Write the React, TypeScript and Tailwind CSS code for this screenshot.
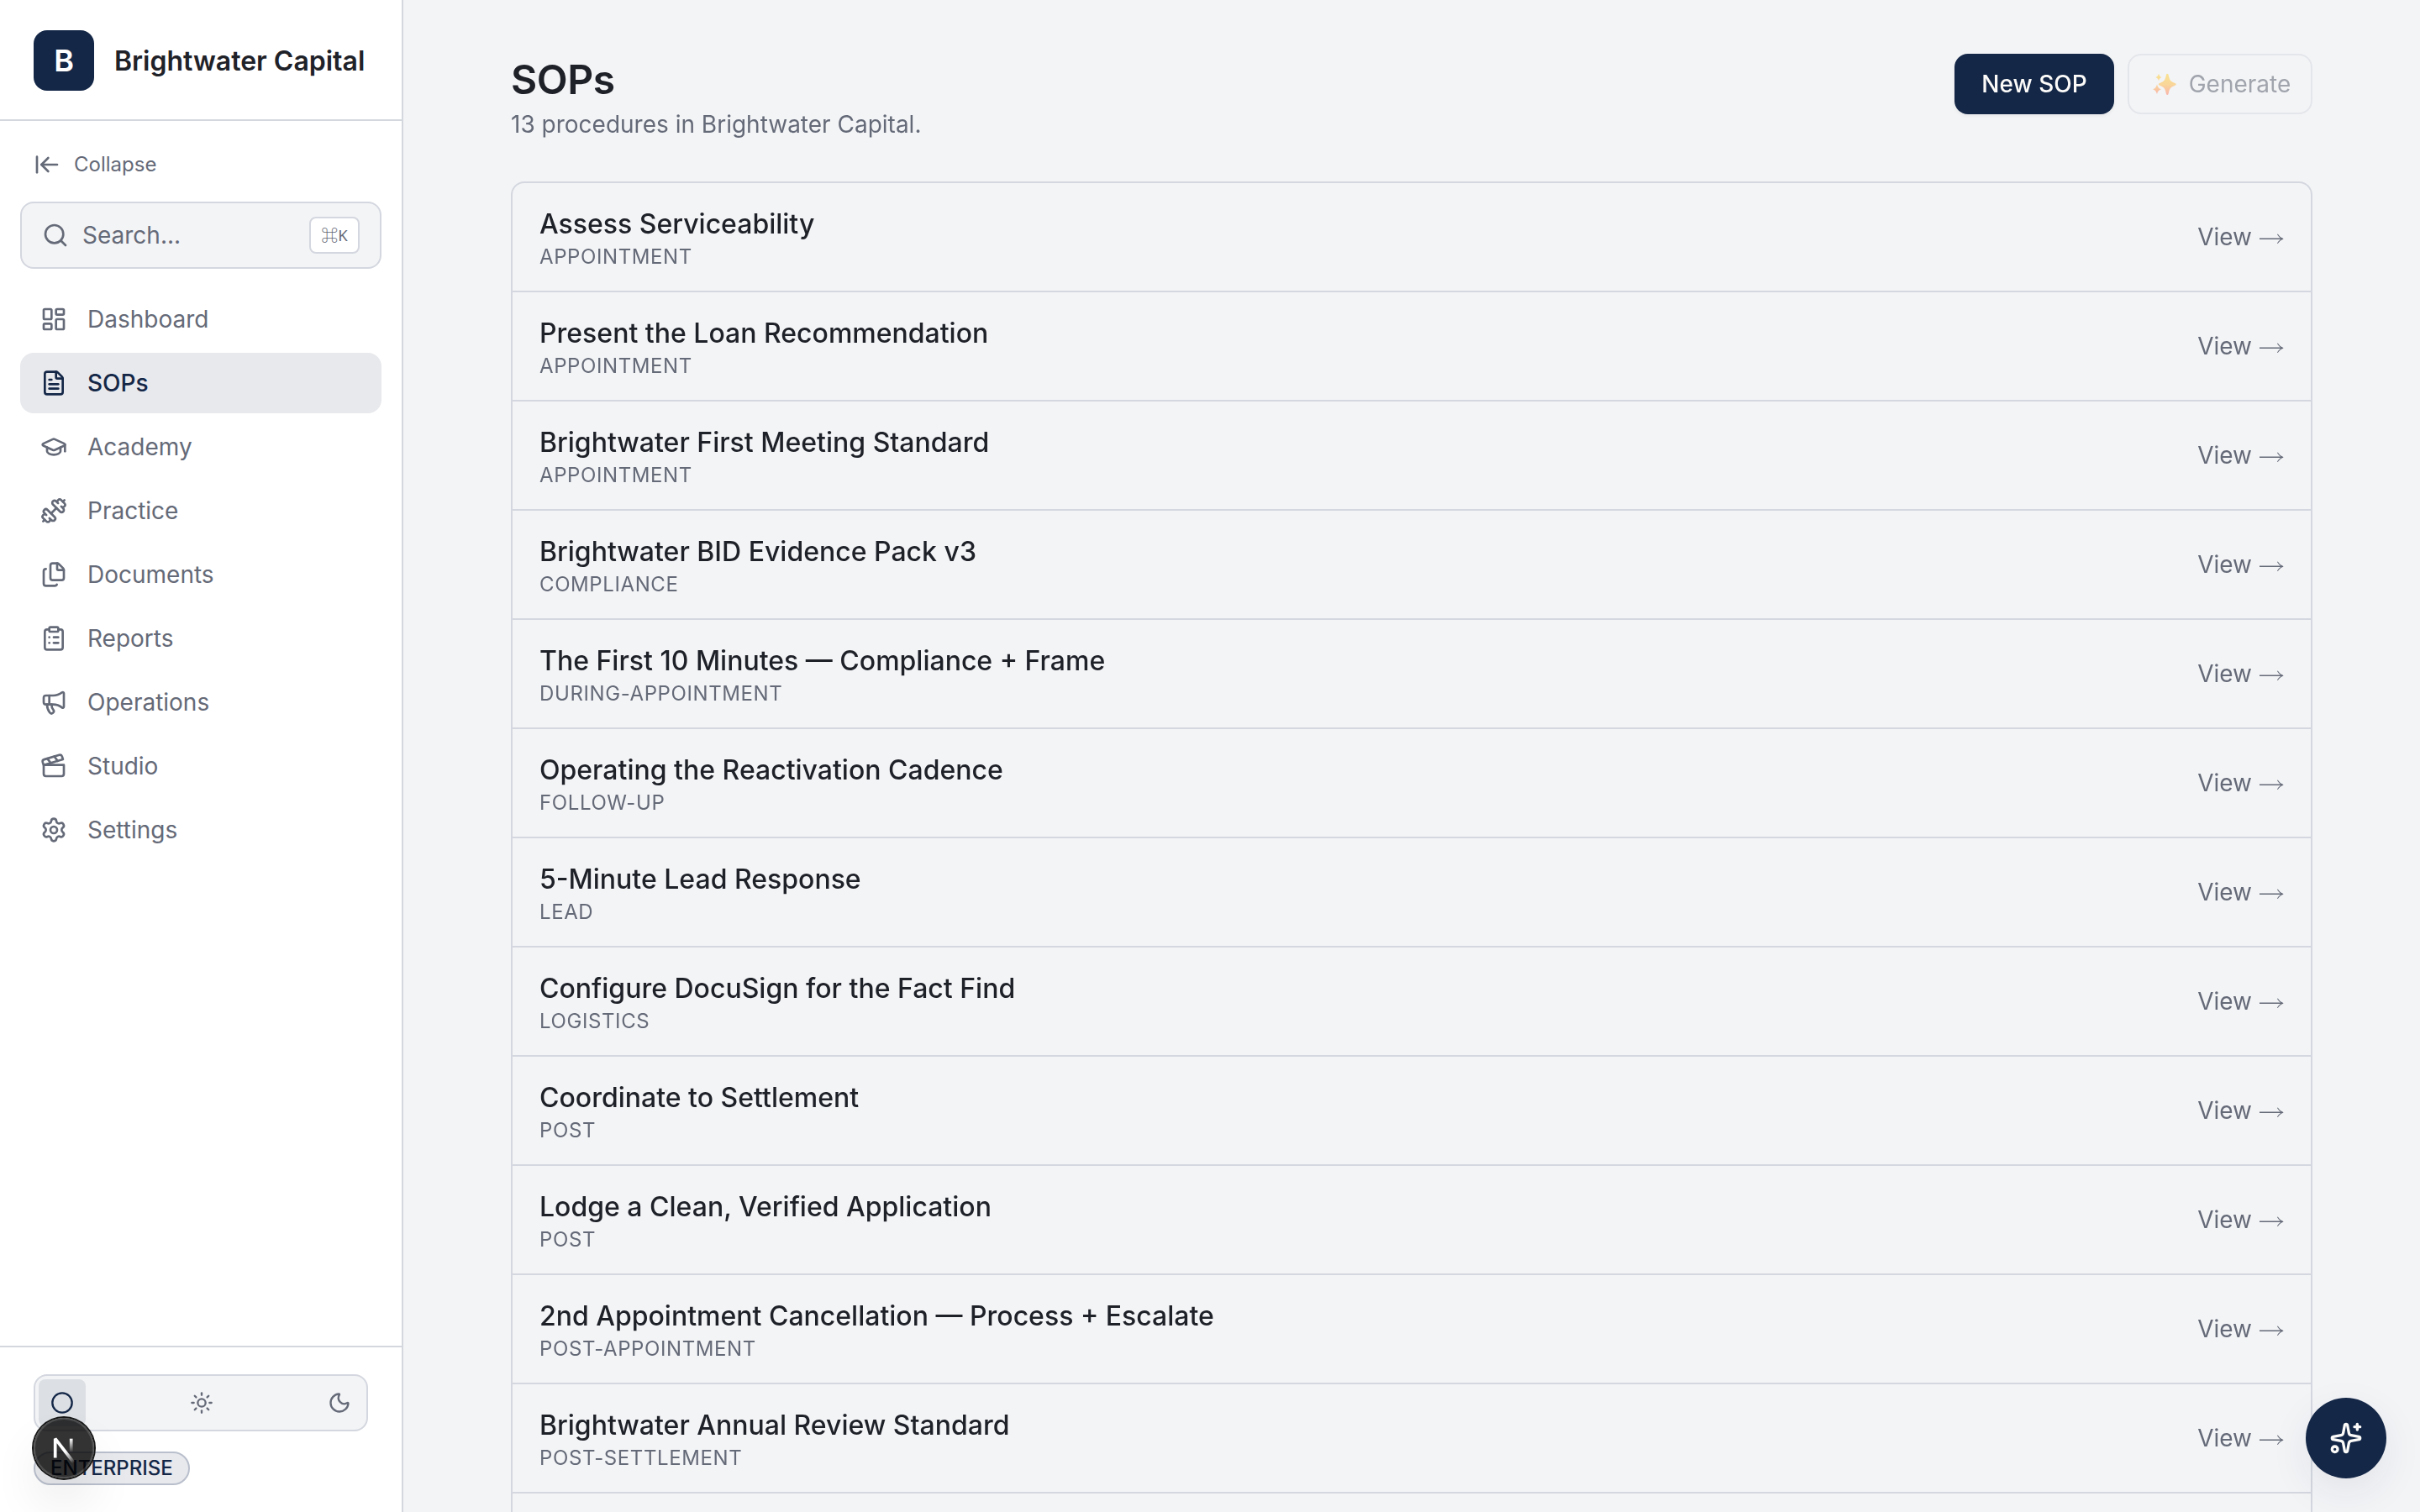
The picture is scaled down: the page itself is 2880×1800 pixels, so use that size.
import React from "react";
import {
    ArrowLeftToLine,
    Circle,
    Clapperboard,
    ClipboardList,
    Dumbbell,
    FileText,
    Files,
    GraduationCap,
    LayoutDashboard,
    Megaphone,
    Moon,
    Search,
    Settings,
    Sparkles,
    Sun,
    type LucideIcon
} from "lucide-react";
import clsx from "clsx";

interface NavItem {
    label: string;
    icon: LucideIcon;
}

interface Procedure {
    title: string;
    stage: string;
}

const navItems: NavItem[] = [
    { label: "Dashboard", icon: LayoutDashboard },
    { label: "SOPs", icon: FileText },
    { label: "Academy", icon: GraduationCap },
    { label: "Practice", icon: Dumbbell },
    { label: "Documents", icon: Files },
    { label: "Reports", icon: ClipboardList },
    { label: "Operations", icon: Megaphone },
    { label: "Studio", icon: Clapperboard },
    { label: "Settings", icon: Settings }
];

const procedures: Procedure[] = [
    { title: "Assess Serviceability", stage: "appointment" },
    { title: "Present the Loan Recommendation", stage: "appointment" },
    { title: "Brightwater First Meeting Standard", stage: "appointment" },
    { title: "Brightwater BID Evidence Pack v3", stage: "compliance" },
    { title: "The First 10 Minutes — Compliance + Frame", stage: "during-appointment" },
    { title: "Operating the Reactivation Cadence", stage: "follow-up" },
    { title: "5-Minute Lead Response", stage: "lead" },
    { title: "Configure DocuSign for the Fact Find", stage: "logistics" },
    { title: "Coordinate to Settlement", stage: "post" },
    { title: "Lodge a Clean, Verified Application", stage: "post" },
    { title: "2nd Appointment Cancellation — Process + Escalate", stage: "post-appointment" },
    { title: "Brightwater Annual Review Standard", stage: "post-settlement" }
];

function ThemeToggle() {
    return (
        <div className="flex items-center justify-between rounded-2xl border-2 border-[#d4d7df] bg-[#f3f4f6] p-1 text-[#656a78]">
            <button className="flex size-14 items-center justify-center rounded-lg bg-[#dcdfe4] text-[#142747]">
                <Circle className="size-7" />
            </button>
            <button className="ml-0.5 flex size-14 items-center justify-center rounded-lg">
                <Sun className="size-7" />
            </button>
            <button className="flex size-14 items-center justify-center rounded-lg">
                <Moon className="size-7" />
            </button>
        </div>
    );
}

function Sidebar({ active }: { active: string }) {
    return (
        <aside className="flex w-[480px] shrink-0 flex-col border-r-2 border-[#d4d7dd] bg-white text-[28px] text-[#656a78]">
            {/* Brand */}
            <div className="flex h-36 items-center gap-6 border-b-2 border-[#d4d7dd] px-10 pt-0.5">
                <div className="flex size-[72px] shrink-0 items-center justify-center rounded-2xl bg-[#142747] text-4xl font-semibold text-white">
                    B
                </div>
                <span className="pt-0.5 text-[32px] font-semibold whitespace-nowrap text-[#1f2229]">
                    Brightwater Capital
                </span>
            </div>

            <div className="flex flex-1 flex-col px-6 pt-6">
                <button className="flex h-14 items-center gap-4 px-4 text-2xl">
                    <ArrowLeftToLine className="size-8" />
                    Collapse
                </button>

                <div className="mt-4 flex h-20 items-center gap-4 rounded-2xl border-2 border-[#d4d7df] bg-[#f3f4f6] px-6">
                    <Search className="size-8" />
                    <span className="flex-1">Search...</span>
                    <kbd className="flex h-11 w-[60px] items-center justify-center rounded-lg border-2 border-[#d4d7df] bg-white font-['Noto_Sans',sans-serif] text-[18.5px] leading-none">
                        <span className="font-['Noto_Sans_CJK_JP',sans-serif] text-xl leading-none">⌘</span>K
                    </kbd>
                </div>

                <nav className="mt-6 flex flex-col gap-1">
                    {navItems.map(({ label, icon: Icon }) => (
                        <a
                            key={label}
                            className={clsx(
                                "flex h-[72px] items-center gap-6 rounded-2xl px-6",
                                label === active && "bg-[#e8e9ed] font-medium text-[#142747]"
                            )}
                        >
                            <Icon className="size-8" />
                            {label}
                        </a>
                    ))}
                </nav>
            </div>

            {/* Footer */}
            <div className="flex h-[198px] flex-col items-stretch gap-6 border-t-2 border-[#d4d7dd] px-10 pt-8">
                <ThemeToggle />
                <span className="flex h-10 items-center self-start rounded-full border-2 border-[#b9bfcc] bg-[#e8e9ed] px-[18px] text-2xl font-medium text-[#142747] uppercase">
                    Enterprise
                </span>
            </div>
        </aside>
    );
}

function LongArrow() {
    return (
        <svg className="h-4 w-[30px]" viewBox="0 0 30 16" fill="currentColor">
            <path d="M1 9.500H26.200C24.500 8.400 23 6.800 22 4.900L22.800 4.500C24.500 7.200 26.600 9.100 29.300 9.900V10.700C26.600 11.500 24.500 13.400 22.800 16L22 15.700C23 13.800 24.500 12.200 26.200 11.100H1Z" />
        </svg>
    );
}

function ProcedureRow({ title, stage }: Procedure) {
    return (
        <a className="flex items-center justify-between border-b-2 border-[#d4d7df] px-8 py-6">
            <div>
                <div className="-mb-0.5 text-[32px] leading-[50px] font-medium text-[#1f2129]">{title}</div>
                <div className="text-2xl leading-8 tracking-wide text-[#656a78] uppercase">{stage}</div>
            </div>
            <span className="flex items-center gap-2 text-[28px] leading-10 text-[#656a78]">
                View
                <LongArrow />
            </span>
        </a>
    );
}

function GenerateStars() {
    return (
        <svg className="h-7 w-[35px]" viewBox="1 0 35 28" fill="url(#stars)">
            <defs>
                <linearGradient id="stars" x1="0" y1="2" x2="0" y2="27" gradientUnits="userSpaceOnUse">
                    <stop stopColor="#ffcf2e" />
                    <stop offset="0.5" stopColor="#ffb83c" />
                    <stop offset="1" stopColor="#ff7460" />
                </linearGradient>
            </defs>
            <path d="M22.3 1.7c.9 0 1.2.7 1.5 2 1 5.2 2.1 7.3 7 9 1.3.4 1.9.8 1.9 1.6s-.6 1.2-1.9 1.6c-4.9 1.7-6 3.8-7 9-.3 1.3-.6 2-1.5 2s-1.2-.7-1.5-2c-1-5.2-2.1-7.3-7-9-1.3-.4-1.9-.8-1.9-1.6s.6-1.2 1.9-1.6c4.9-1.7 6-3.8 7-9 .3-1.3.6-2 1.5-2z" />
            <path d="M12 1.7c.9 2.7 1.4 3.4 3.6 4.3-2.2.9-2.7 1.6-3.6 4.3-.9-2.7-1.4-3.4-3.6-4.3 2.2-.9 2.7-1.6 3.6-4.3z" />
            <path d="M10 14.5c1.1 3.6 1.9 4.6 4.9 5.8-3 1.2-3.8 2.2-4.9 5.8-1.1-3.6-1.9-4.6-4.9-5.8 3-1.2 3.8-2.2 4.9-5.8z" />
        </svg>
    );
}

function DevBadge() {
    return (
        <div className="absolute bottom-10 left-10 size-[72px] rounded-full bg-black/80 shadow-[0_0_0_2px_#171717,inset_0_0_0_2px_rgba(255,255,255,0.14),0_32px_64px_-16px_rgba(0,0,0,0.24)]">
            <svg className="size-[72px]" viewBox="0 0 72 72" fill="none">
                <path d="M47.6 53 L25.7 24.7 V47.6" stroke="url(#nDiagonal)" strokeWidth="3.7" strokeLinejoin="bevel" />
                <path d="M44.7 24.7 V47.6" stroke="url(#nStem)" strokeWidth="3.7" />
                <defs>
                    <linearGradient id="nDiagonal" x1="38" y1="40" x2="48" y2="53" gradientUnits="userSpaceOnUse">
                        <stop stopColor="white" />
                        <stop offset="0.6" stopColor="white" stopOpacity="0.5" />
                        <stop offset="1" stopColor="white" stopOpacity="0" />
                    </linearGradient>
                    <linearGradient id="nStem" x1="44" y1="25" x2="44" y2="41" gradientUnits="userSpaceOnUse">
                        <stop stopColor="white" />
                        <stop offset="1" stopColor="white" stopOpacity="0" />
                    </linearGradient>
                </defs>
            </svg>
        </div>
    );
}

export default function App() {
    return (
        <div className="relative flex h-[1800px] w-[2880px] overflow-hidden bg-[#f3f4f6] font-['Inter',sans-serif]">
            <Sidebar active="SOPs" />

            <main className="flex flex-1 flex-col px-32 pt-16 will-change-transform">
                <header className="mb-12 flex items-start justify-between">
                    <div>
                        <h1 className="text-5xl leading-[62px] font-semibold tracking-[-0.01em] text-[#1f2129]">SOPs</h1>
                        <p className="mt-0.5 text-[28px] leading-10 text-[#656a78]">
                            13 procedures in Brightwater Capital.
                        </p>
                    </div>
                    <div className="flex gap-4 text-[28px] font-medium">
                        <button className="h-[72px] w-[190px] rounded-2xl bg-[#142747] text-[#fcfbf9] shadow-[0_2px_4px_rgba(0,0,0,0.06)]">
                            New SOP
                        </button>
                        <button className="flex h-[72px] w-[220px] items-center justify-center gap-3 rounded-2xl border-2 border-[#d4d7df] font-normal text-[#4f5463] opacity-50">
                            <GenerateStars />
                            Generate
                        </button>
                    </div>
                </header>

                {/* The list runs on past the bottom of the viewport */}
                <div className="flex-1 rounded-t-2xl border-2 border-b-0 border-[#d4d7df]">
                    {procedures.map((procedure) => (
                        <ProcedureRow key={procedure.title} {...procedure} />
                    ))}
                </div>
            </main>

            <DevBadge />

            {/* Assistant */}
            <button className="absolute right-10 bottom-10 flex size-24 items-center justify-center rounded-full bg-[#142747] text-[#fcfbf9] shadow-[0_16px_48px_rgba(20,39,71,0.08)]">
                <Sparkles className="size-10" />
            </button>
        </div>
    );
}
